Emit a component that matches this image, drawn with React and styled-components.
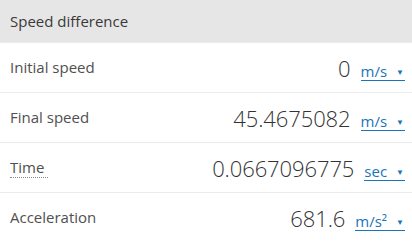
import React from 'react';
import styled, { createGlobalStyle } from 'styled-components';

const GlobalStyle = createGlobalStyle`
  html, body {
    margin: 0;
    padding: 0;
    background: #fff;
  }
  body {
    font-family: "Open Sans", "Noto Sans", sans-serif;
  }
`;

const rows = [
  { label: 'Initial speed', value: '0', unit: 'm/s' },
  { label: 'Final speed', value: '45.4675082', unit: 'm/s' },
  { label: 'Time', value: '0.0667096775', unit: 'sec', dotted: true },
  { label: 'Acceleration', value: '681.6', unit: 'm/s²' },
];

const App = () => {
  return (
    <>
      <GlobalStyle />
      <Panel>
        <Header>Speed difference</Header>
        {rows.map((row) => (
          <Row key={row.label}>
            <Label $dotted={row.dotted}>{row.label}</Label>
            <ValueBox>
              <Value>{row.value}</Value>
              <Unit href="#">
                {row.unit}
                <Caret>▼</Caret>
              </Unit>
            </ValueBox>
          </Row>
        ))}
      </Panel>
    </>
  );
};

const Panel = styled.div`
  width: 412px;
  height: 242px;
  overflow: hidden;
`;

const Header = styled.div`
  height: 42px;
  background-color: #e6e6e6;
  color: #3a3a3a;
  font-size: 15px;
  display: flex;
  align-items: center;
  padding-left: 10px;
  box-sizing: border-box;
`;

const Row = styled.div`
  height: 50px;
  display: flex;
  align-items: center;
  justify-content: space-between;
  padding: 0 7px 0 10px;
  box-sizing: border-box;
  border-top: 1px solid #ececec;

  &:first-of-type {
    border-top: none;
  }
`;

const Label = styled.span`
  color: #505050;
  font-size: 15px;
  line-height: 19px;
  padding-right: ${(p) => (p.$dotted ? '4px' : '0')};
  border-bottom: ${(p) => (p.$dotted ? '1px dotted #888' : 'none')};
`;

const ValueBox = styled.div`
  display: flex;
  align-items: baseline;
  gap: 10px;
`;

const Value = styled.span`
  color: #333;
  font-size: 22px;
  font-weight: 300;
  letter-spacing: -0.1px;
`;

const Unit = styled.a`
  color: #1a74b8;
  font-size: 15px;
  line-height: 17px;
  text-decoration: none;
  border-bottom: 1px solid #1a74b8;
  display: inline-flex;
  align-items: center;
`;

const Caret = styled.span`
  font-size: 8px;
  margin-left: 9px;
  padding-right: 1px;
`;

export default App;
